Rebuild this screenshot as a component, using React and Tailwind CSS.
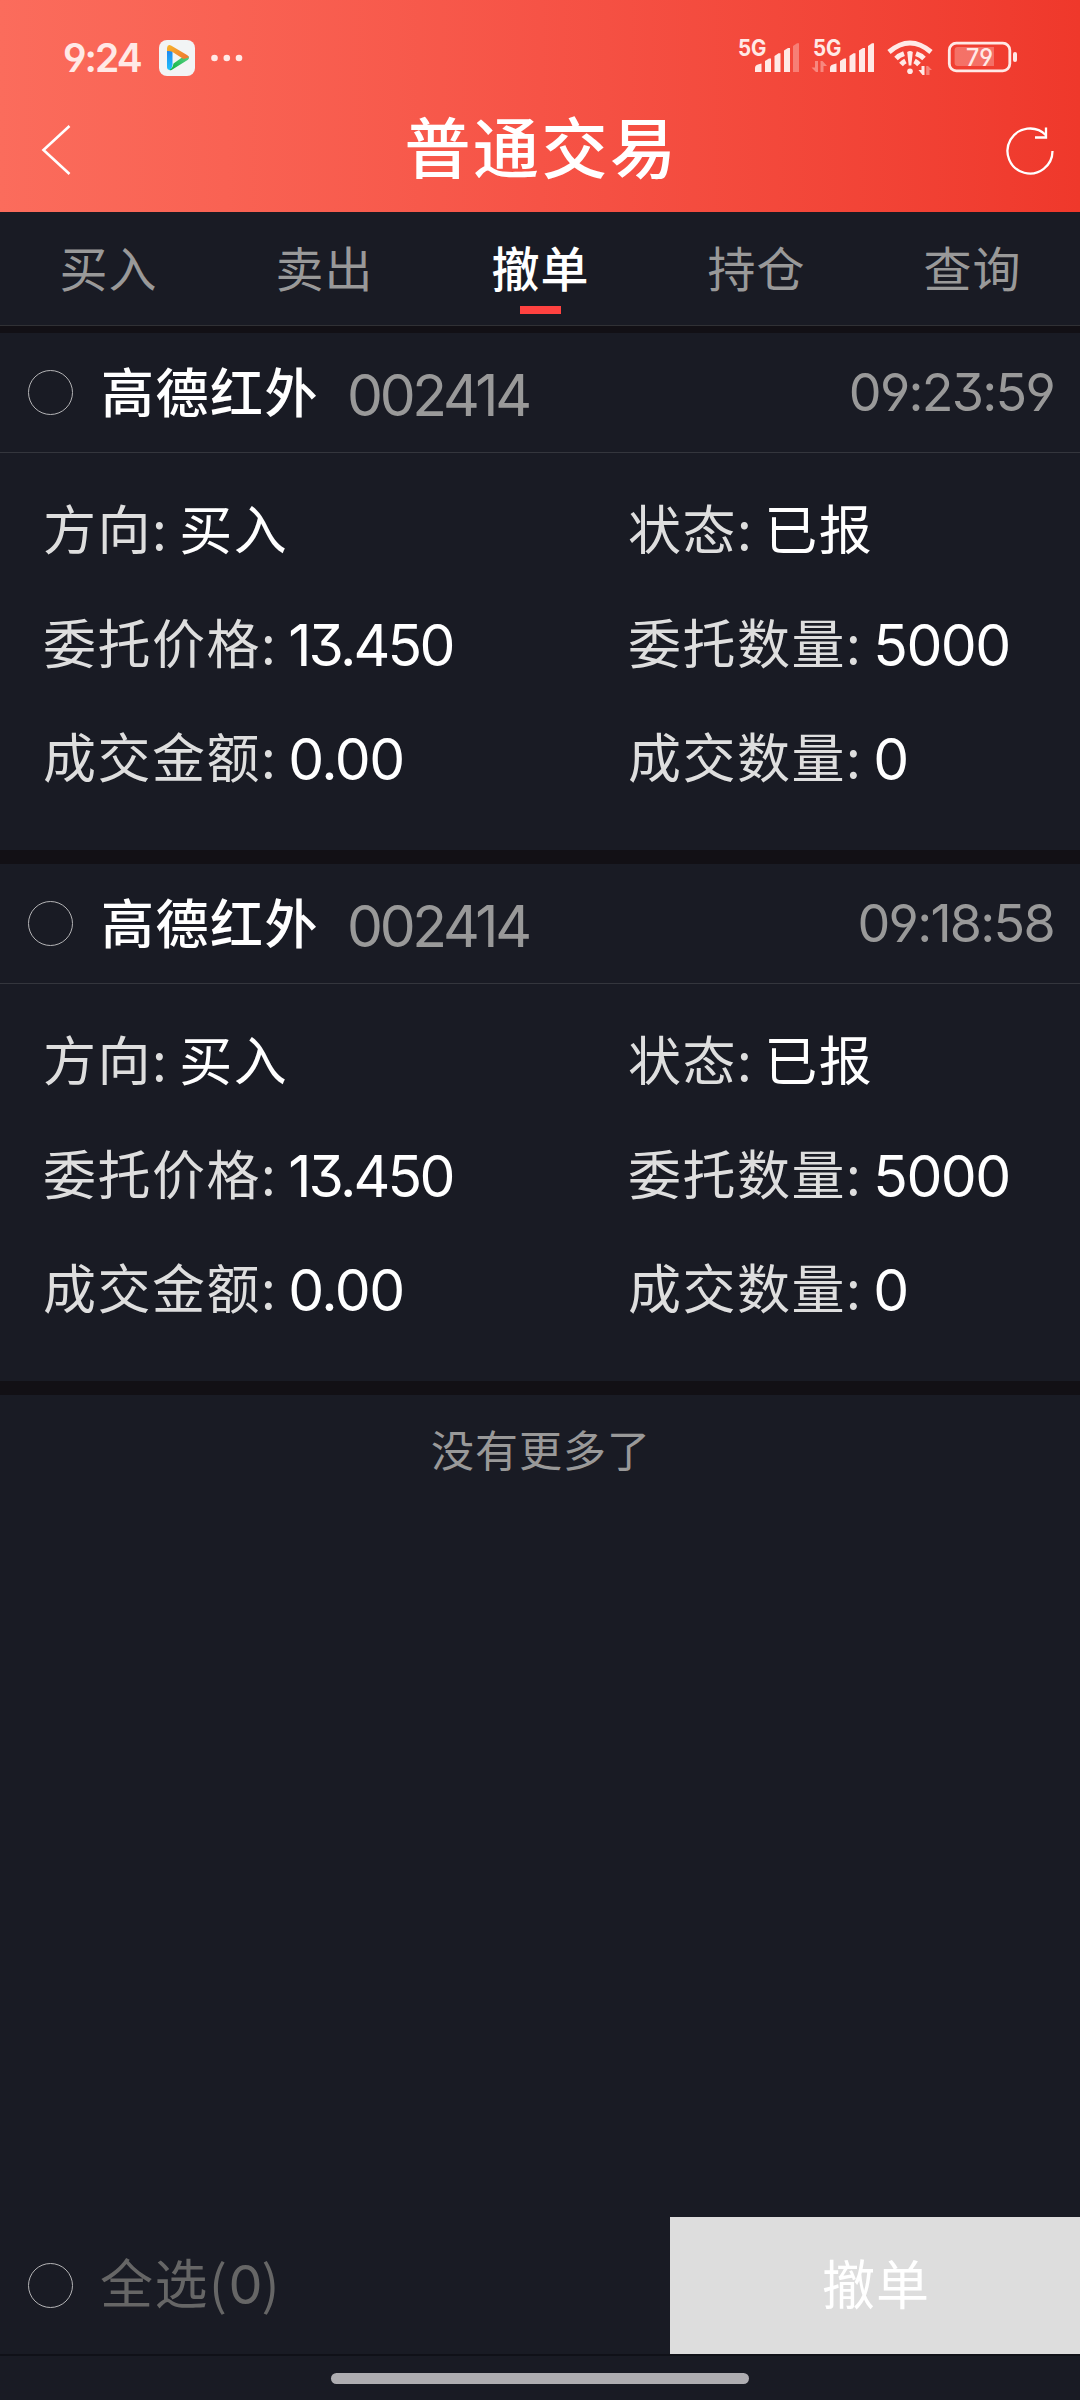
import React, { useState } from 'react';

const TABS = ['买入', '卖出', '撤单', '持仓', '查询'];

const ORDERS = [
  {
    id: 1,
    name: '高德红外',
    code: '002414',
    time: '09:23:59',
    direction: '买入',
    status: '已报',
    price: '13.450',
    amount: '5000',
    dealMoney: '0.00',
    dealAmount: '0',
  },
  {
    id: 2,
    name: '高德红外',
    code: '002414',
    time: '09:18:58',
    direction: '买入',
    status: '已报',
    price: '13.450',
    amount: '5000',
    dealMoney: '0.00',
    dealAmount: '0',
  },
];

function SignalBars({ weak }) {
  return (
    <g>
      <path d="M0 29v-4.5q0-3 6.5-4V29z" />
      <path d="M10 29V18l4-2.5h2V29z" />
      <path d="M19.5 29V13l4-2.7h2V29z" />
      <path d="M29 29V7.500l4-2.500h2V29z" />
      <path d="M38 29V3l4-2.700h2V29z" opacity={weak ? 0.35 : 1} />
    </g>
  );
}

function StatusBar() {
  return (
    <div className="flex h-[100px] items-start justify-between pl-[63px] pr-[60px] pt-[36px]">
      <div className="flex h-[44px] items-center">
        <span className="w-[96px] pb-[2px] font-['Inter','Noto_Sans_CJK_SC',sans-serif] text-[39px] font-semibold leading-none tracking-[-2px] text-[#ffe9e6] [font-feature-settings:'cv04']">
          9:24
        </span>
        <svg width="36" height="36" viewBox="0 0 36 36">
          <defs>
            <linearGradient id="appBlue" x1="0" y1="0" x2="0" y2="1">
              <stop offset="0" stopColor="#1f86f0" />
              <stop offset="1" stopColor="#1fc0fb" />
            </linearGradient>
            <linearGradient id="appOrange" x1="0" y1="0" x2="1" y2="0.6">
              <stop offset="0" stopColor="#f7b52c" />
              <stop offset="1" stopColor="#ef7d31" />
            </linearGradient>
            <linearGradient id="appGreen" x1="0" y1="1" x2="1" y2="0">
              <stop offset="0" stopColor="#08b53c" />
              <stop offset="1" stopColor="#5ed08a" />
            </linearGradient>
          </defs>
          <rect width="36" height="36" rx="8" fill="#f2f4f5" />
          <path d="M8 10h5.500v15l-1.500 5q-4 .5-4-3z" fill="url(#appBlue)" />
          <path d="M14.500 23.500L26.500 15l3 1.200q1.500 1.800-.5 3.600L12.500 30q-1.500.5-2 0 3-1.500 4-6.500z" fill="url(#appGreen)" />
          <path d="M8 11V8q.5-4 4-2.500L28 15q2 1 1.800 2.500L24.500 19 13.500 12q-2-1.200-5.500-1z" fill="url(#appOrange)" />
        </svg>
        <svg className="ml-[16px]" width="32" height="8" viewBox="0 0 32 8" fill="#ffe9e6">
          <circle cx="3.500" cy="4" r="3.300" />
          <circle cx="15.800" cy="4" r="3.300" />
          <circle cx="28" cy="4" r="3.300" />
        </svg>
      </div>

      <svg width="282" height="52" viewBox="738 36 282 52" fill="#ffe9e6" className="overflow-visible">
        <g className="font-['Inter',sans-serif] text-[23px] font-bold">
          <text x="738" y="56" textLength="28.500" lengthAdjust="spacingAndGlyphs">5G</text>
          <text x="813" y="56" textLength="28.500" lengthAdjust="spacingAndGlyphs">5G</text>
        </g>
        <g transform="translate(755 43)">
          <SignalBars weak />
        </g>
        <g transform="translate(830 43)">
          <SignalBars />
        </g>
        <path d="M811.500 67.500h3.500V61h3v11h-2zM827 66h-3.500v6h-3V61h2z" opacity="0.4" />

        {/* Wi-Fi without internet access */}
        <g fill="none" stroke="#ffe9e6">
          <path d="M889 52Q910 34 931 52" strokeWidth="5" />
          <path d="M896 58.500q3-3 8-4.800M916 53.700q5 1.800 8 4.800" strokeWidth="5" />
          <path d="M901 64.500q2-2.200 4.500-3.500M914.500 61q2.500 1.300 4.500 3.500" strokeWidth="5" />
        </g>
        <path d="M907.200 52q2.800-2 5.600 0l-1.500 13.500h-2.600z" />
        <circle cx="910" cy="71.300" r="2.800" />
        <path d="M918.500 70h3v-4h3v9h-2z" />
        <path d="M932 70h-2.500v5h-3.300v-9h1.800z" opacity="0.4" />

        <rect x="949.300" y="43.200" width="60.500" height="27.600" rx="7" fill="none" stroke="#ffe9e6" strokeWidth="2.800" />
        <path d="M957.600 47H994v19h-36.400q-3 0-3-3V50q0-3 3-3z" opacity="0.3" />
        <rect x="1013" y="52" width="4" height="10" rx="2" />
        <text x="966" y="66" textLength="27" lengthAdjust="spacingAndGlyphs" className="font-['Inter',sans-serif] text-[24.500px] font-medium [font-feature-settings:'cv04']">79</text>
      </svg>
    </div>
  );
}

function TitleBar() {
  return (
    <div className="flex h-[100px] items-center justify-between pl-[40px] pr-[25px]">
      <svg width="34" height="52" viewBox="0 0 34 52" fill="none" stroke="#fff" strokeWidth="2.600">
        <path d="M29.500 2L3.500 26l26 24" />
      </svg>
      <h1 className="pb-[12px] pl-[4px] font-['Noto_Sans_CJK_SC',sans-serif] text-[66px] font-medium leading-none tracking-[2.500px] text-white">
        普通交易
      </h1>
      <svg width="50" height="50" viewBox="0 0 50 50" fill="none" stroke="#fff" strokeWidth="2.300">
        <path d="M47.500 26A22.500 22.500 0 1 1 41 10.200" />
        <path d="M41 2.500V12.500H30" />
      </svg>
    </div>
  );
}

function Circle() {
  return <span className="block h-[45px] w-[45px] shrink-0 rounded-full border-[1.500px] border-[#b4b4b6]" />;
}

function Field({ label, value, tight }) {
  return (
    <div className="flex h-[114px] items-center whitespace-pre leading-none">
      <span className="pb-[4px] font-['Noto_Sans_CJK_SC',sans-serif] text-[53px] tracking-[1.500px] text-[#dedede]">{label}:</span>
      <span
        className={`ml-[11px] pt-[4px] font-['Inter','Noto_Sans_CJK_SC',sans-serif] text-[57px] text-white [font-feature-settings:'cv09','cv04'] ${
          tight ? 'tracking-[-2.800px]' : 'tracking-[-1.500px]'
        }`}
      >
        {value}
      </span>
    </div>
  );
}

function TextField({ label, value }) {
  return (
    <div className="flex h-[114px] items-center whitespace-pre pb-[4px] font-['Noto_Sans_CJK_SC',sans-serif] text-[53px] leading-none tracking-[1.500px]">
      <span className="text-[#dedede]">{label}:</span>
      <span className="ml-[11px] text-white">{value}</span>
    </div>
  );
}

function OrderCard({ order, checked, onToggle }) {
  return (
    <section className="border-b-[14px] border-[#121015]">
      <div
        onClick={onToggle}
        aria-checked={checked}
        role="checkbox"
        className="flex h-[120px] items-center border-b border-[#34363d] pl-[28px] pr-[26px] leading-none"
      >
        <Circle />
        <span className="ml-[28px] pb-[5px] font-['Noto_Sans_CJK_SC',sans-serif] text-[53px] font-medium tracking-[1.500px] text-white">
          {order.name}
        </span>
        <span className="ml-[28px] pt-[5px] font-['Inter',sans-serif] text-[57px] tracking-[-3.300px] text-[#999]">{order.code}</span>
        <span className="ml-auto pt-[1px] font-['Inter',sans-serif] text-[52px] tracking-[-1.700px] text-[#999] [font-feature-settings:'cv09','cv04']">
          {order.time}
        </span>
      </div>
      <div className="grid h-[397px] grid-cols-[585px_1fr] content-start pl-[43px] pt-[19px]">
        <TextField label="方向" value={order.direction} />
        <TextField label="状态" value={order.status} />
        <Field label="委托价格" value={order.price} tight />
        <Field label="委托数量" value={order.amount} />
        <Field label="成交金额" value={order.dealMoney} />
        <Field label="成交数量" value={order.dealAmount} />
      </div>
    </section>
  );
}

export default function App() {
  const [tab, setTab] = useState('撤单');
  const [selected, setSelected] = useState([]);

  const toggle = (id) => {
    setSelected(selected.includes(id) ? selected.filter((s) => s !== id) : [...selected, id]);
  };

  return (
    <div className="flex h-[2400px] w-[1080px] flex-col overflow-hidden bg-[#191b24]">
      <header className="h-[212px] bg-linear-to-r from-[#fb6c5c] via-[#f65346] to-[#ef382b]">
        <StatusBar />
        <TitleBar />
      </header>

      <nav className="grid h-[114px] shrink-0 grid-cols-5 border-b border-[#303135]">
        {TABS.map((t) => (
          <button
            key={t}
            onClick={() => setTab(t)}
            className={`flex flex-col items-center pt-[30px] font-['Noto_Sans_CJK_SC',sans-serif] text-[48px] leading-none tracking-[1px] ${
              t === tab ? 'font-medium text-white' : 'text-[#999]'
            }`}
          >
            <span className="pl-[1px]">{t}</span>
            {t === tab && <span className="mt-[16px] h-[8px] w-[41px] bg-[#ff4240]" />}
          </button>
        ))}
      </nav>

      <main className="flex-1 border-t-[7px] border-[#121015]">
        {ORDERS.map((order) => (
          <OrderCard
            key={order.id}
            order={order}
            checked={selected.includes(order.id)}
            onToggle={() => toggle(order.id)}
          />
        ))}
        <p className="pl-[2px] pt-[32px] text-center font-['Noto_Sans_CJK_SC',sans-serif] text-[43px] leading-none tracking-[1px] text-[#999]">
          没有更多了
        </p>
      </main>

      <footer className="flex h-[139px] shrink-0 items-stretch border-b-2 border-[#101118]">
        <div className="flex flex-1 items-center pl-[28px] leading-none">
          <Circle />
          <span className="ml-[27px] flex items-center pb-[8px] font-['Noto_Sans_CJK_SC',sans-serif] text-[53px] tracking-[1.500px] text-[#666]">
            全选(<span className="pt-[6px] font-['Inter',sans-serif] text-[54px] tracking-[-1px]">{selected.length}</span>)
          </span>
        </div>
        <button className="w-[410px] bg-[#ddd] pb-[6px] pl-[2px] font-['Noto_Sans_CJK_SC',sans-serif] text-[53px] leading-none tracking-[1px] text-white">
          撤单
        </button>
      </footer>

      <div className="flex h-[44px] shrink-0 justify-center pt-[17px]">
        <span className="h-[11px] w-[418px] rounded-full bg-[#aeadb1]" />
      </div>
    </div>
  );
}
